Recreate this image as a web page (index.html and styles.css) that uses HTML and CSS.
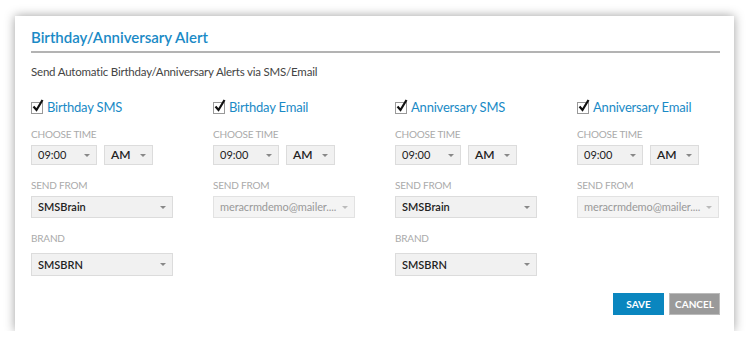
FILE: index.html
```html
<!DOCTYPE html>
<html>
<head>
<meta charset="utf-8">
<link rel="stylesheet" href="styles.css">
</head>
<body>
<div class="panel">
  <div class="title">Birthday/Anniversary Alert</div>
  <div class="subtitle">Send Automatic Birthday/Anniversary Alerts via SMS/Email</div>
  <div class="grid">
    <div class="col">
      <div class="check"><span class="box"><svg width="14" height="14" viewBox="0 0 14 14"><path d="M2.5 7.5 L5.5 11 L11.5 1" fill="none" stroke="#111" stroke-width="2.2"/></svg></span>Birthday SMS</div>
      <div class="label">CHOOSE TIME</div>
      <div class="row">
        <div class="sel time">09:00<i></i></div>
        <div class="sel ampm">AM<i></i></div>
      </div>
      <div class="label l-from">SEND FROM</div>
      <div class="sel wide">SMSBrain<i></i></div>
      <div class="label l-brand">BRAND</div>
      <div class="sel wide brand">SMSBRN<i></i></div>
    </div>
    <div class="col">
      <div class="check"><span class="box"><svg width="14" height="14" viewBox="0 0 14 14"><path d="M2.5 7.5 L5.5 11 L11.5 1" fill="none" stroke="#111" stroke-width="2.2"/></svg></span>Birthday Email</div>
      <div class="label">CHOOSE TIME</div>
      <div class="row">
        <div class="sel time">09:00<i></i></div>
        <div class="sel ampm">AM<i></i></div>
      </div>
      <div class="label l-from">SEND FROM</div>
      <div class="sel wide disabled">meracrmdemo@mailer....<i></i></div>
    </div>
    <div class="col">
      <div class="check"><span class="box"><svg width="14" height="14" viewBox="0 0 14 14"><path d="M2.5 7.5 L5.5 11 L11.5 1" fill="none" stroke="#111" stroke-width="2.2"/></svg></span>Anniversary SMS</div>
      <div class="label">CHOOSE TIME</div>
      <div class="row">
        <div class="sel time">09:00<i></i></div>
        <div class="sel ampm">AM<i></i></div>
      </div>
      <div class="label l-from">SEND FROM</div>
      <div class="sel wide">SMSBrain<i></i></div>
      <div class="label l-brand">BRAND</div>
      <div class="sel wide brand">SMSBRN<i></i></div>
    </div>
    <div class="col">
      <div class="check"><span class="box"><svg width="14" height="14" viewBox="0 0 14 14"><path d="M2.5 7.5 L5.5 11 L11.5 1" fill="none" stroke="#111" stroke-width="2.2"/></svg></span>Anniversary Email</div>
      <div class="label">CHOOSE TIME</div>
      <div class="row">
        <div class="sel time">09:00<i></i></div>
        <div class="sel ampm">AM<i></i></div>
      </div>
      <div class="label l-from">SEND FROM</div>
      <div class="sel wide disabled">meracrmdemo@mailer....<i></i></div>
    </div>
  </div>
  <div class="actions">
    <div class="btn save">SAVE</div>
    <div class="btn cancel">CANCEL</div>
  </div>
</div>
</body>
</html>
```

FILE: styles.css
```css
html, body {
  margin: 0;
  padding: 0;
  background: #ffffff;
}
body {
  font-family: Lato, "Open Sans", sans-serif;
  padding: 16px 0 0 15px;
}
.panel {
  width: 719px;
  height: 315px;
  box-sizing: border-box;
  padding: 0 14px 0 16px;
  background: #fff;
  box-shadow: 0 0 10px rgba(0, 0, 0, 0.38);
  display: flex;
  flex-direction: column;
}
.title {
  font-size: 15px;
  font-weight: 600;
  color: #1a8ac6;
  height: 37px;
  line-height: 20px;
  box-sizing: border-box;
  display: flex;
  align-items: flex-end;
  padding-bottom: 4px;
  border-bottom: 2px solid #b3b3b3;
}
.subtitle {
  font-size: 11.5px;
  letter-spacing: -0.2px;
  color: #444;
  margin-top: 11px;
  line-height: 15px;
}
.grid {
  display: grid;
  grid-template-columns: 182px 182px 182px 182px;
  margin-top: 19px;
}
.col {
  display: flex;
  flex-direction: column;
}
.check {
  display: flex;
  align-items: center;
  font-size: 13px;
  letter-spacing: -0.2px;
  color: #1a8ac6;
  height: 18px;
  line-height: 18px;
}
.box {
  position: relative;
  width: 10px;
  height: 10px;
  border: 1px solid #999;
  background: #fff;
  margin-right: 4px;
  margin-top: 2px;
}
.box svg {
  position: absolute;
  left: -1px;
  top: -4px;
}
.label {
  font-size: 10px;
  letter-spacing: -0.2px;
  color: #aaa;
  line-height: 14px;
  margin-top: 11px;
  height: 14px;
}
.label.l-from {
  margin-top: 13px;
}
.label.l-brand {
  margin-top: 13px;
}
.row {
  display: flex;
  gap: 7px;
  margin-top: 4px;
}
.sel {
  position: relative;
  box-sizing: border-box;
  height: 20px;
  line-height: 18px;
  border: 1px solid #dcdcdc;
  background: #f1f1f1;
  font-size: 11px;
  color: #222;
  padding-left: 6px;
  white-space: nowrap;
  overflow: hidden;
}
.sel i {
  position: absolute;
  right: 6px;
  top: 8px;
  width: 0;
  height: 0;
  border-left: 3px solid transparent;
  border-right: 3px solid transparent;
  border-top: 3px solid #888;
}
.sel.time { width: 66px; }
.sel.ampm { width: 49px; font-weight: 600; font-size: 12px; }
.sel.wide {
  width: 142px;
  height: 22px;
  line-height: 20px;
  margin-top: 4px;
  font-weight: 600;
}
.sel.wide i { top: 9px; }
.sel.brand {
  height: 23px;
  line-height: 21px;
  margin-top: 8px;
}
.sel.disabled {
  color: #999;
  font-weight: 400;
  letter-spacing: -0.1px;
  background: #f4f4f4;
  border-color: #e2e2e2;
}
.sel.disabled i { border-top-color: #bbb; }
.actions {
  display: flex;
  justify-content: flex-end;
  gap: 5px;
  margin-top: auto;
  margin-bottom: 16px;
}
.btn {
  height: 22px;
  line-height: 22px;
  font-size: 10px;
  font-weight: 700;
  color: #fff;
  text-align: center;
  box-sizing: border-box;
}
.btn.save {
  width: 51px;
  background: #0a86bf;
}
.btn.cancel {
  width: 51px;
  background: #9a9a9a;
  border: 1px solid #bbb;
  line-height: 20px;
}
```
